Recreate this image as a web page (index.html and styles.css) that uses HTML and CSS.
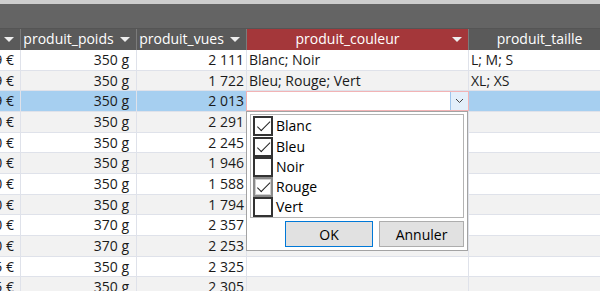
FILE: index.html
```html
<!DOCTYPE html>
<html lang="fr">
<head>
    <meta charset="UTF-8">
    <title>Produits</title>
    <link rel="stylesheet" href="styles.css">
</head>
<body>
<div class="app">
    <div class="topStrip"></div>
    <div class="toolbar"></div>
    <div class="grid">
        <div class="head">
            <div class="hcell"><span class="arrow"></span></div>
            <div class="hcell">produit_poids<span class="arrow"></span></div>
            <div class="hcell">produit_vues<span class="arrow"></span></div>
            <div class="hcell active">produit_couleur<span class="arrow"></span></div>
            <div class="hcell">produit_taille<span class="arrow"></span></div>
        </div>

        <div class="row">
            <div class="cell num">29,99 €</div><div class="cell num">350 g</div><div class="cell num">2 111</div>
            <div class="cell">Blanc; Noir</div><div class="cell">L; M; S</div>
        </div>
        <div class="row alt">
            <div class="cell num">29,99 €</div><div class="cell num">350 g</div><div class="cell num">1 722</div>
            <div class="cell">Bleu; Rouge; Vert</div><div class="cell">XL; XS</div>
        </div>
        <div class="row selected">
            <div class="cell num">29,99 €</div><div class="cell num">350 g</div><div class="cell num">2 013</div>
            <div class="cell comboCell">
                <div class="combo">
                    <span class="comboText"></span>
                    <span class="comboBtn">
                        <svg width="9" height="6" viewBox="0 0 9 6"><polyline points="1,1 4.5,4.5 8,1" fill="none" stroke="#444" stroke-width="1"/></svg>
                    </span>
                </div>
                <div class="popup">
                    <div class="list">
                        <div class="item"><span class="box checked"></span>Blanc</div>
                        <div class="item"><span class="box checked"></span>Bleu</div>
                        <div class="item"><span class="box"></span>Noir</div>
                        <div class="item"><span class="box checked hover"></span>Rouge</div>
                        <div class="item"><span class="box"></span>Vert</div>
                    </div>
                    <div class="buttons">
                        <button type="button" class="btn default">OK</button>
                        <button type="button" class="btn">Annuler</button>
                    </div>
                </div>
            </div>
            <div class="cell"></div>
        </div>
        <div class="row alt">
            <div class="cell num">20,00 €</div><div class="cell num">350 g</div><div class="cell num">2 291</div>
            <div class="cell"></div><div class="cell"></div>
        </div>
        <div class="row">
            <div class="cell num">20,00 €</div><div class="cell num">350 g</div><div class="cell num">2 245</div>
            <div class="cell"></div><div class="cell"></div>
        </div>
        <div class="row alt">
            <div class="cell num">20,00 €</div><div class="cell num">350 g</div><div class="cell num">1 946</div>
            <div class="cell"></div><div class="cell"></div>
        </div>
        <div class="row">
            <div class="cell num">20,00 €</div><div class="cell num">350 g</div><div class="cell num">1 588</div>
            <div class="cell"></div><div class="cell"></div>
        </div>
        <div class="row alt">
            <div class="cell num">20,00 €</div><div class="cell num">350 g</div><div class="cell num">1 794</div>
            <div class="cell"></div><div class="cell"></div>
        </div>
        <div class="row">
            <div class="cell num">30,00 €</div><div class="cell num">370 g</div><div class="cell num">2 357</div>
            <div class="cell"></div><div class="cell"></div>
        </div>
        <div class="row alt">
            <div class="cell num">30,00 €</div><div class="cell num">370 g</div><div class="cell num">2 253</div>
            <div class="cell"></div><div class="cell"></div>
        </div>
        <div class="row">
            <div class="cell num">24,95 €</div><div class="cell num">350 g</div><div class="cell num">2 325</div>
            <div class="cell"></div><div class="cell"></div>
        </div>
        <div class="row alt">
            <div class="cell num">24,95 €</div><div class="cell num">350 g</div><div class="cell num">2 305</div>
            <div class="cell"></div><div class="cell"></div>
        </div>
    </div>
</div>
</body>
</html>
```

FILE: styles.css
```css
body {
    margin: 0;
    overflow: hidden;
    font-family: "Open Sans", "Noto Sans", sans-serif;
    font-size: 14px;
    color: #1a1a1a;
    background: #fff;
}

.app {
    width: 640px;
}

.topStrip {
    height: 4px;
    background-color: #cdcdcd;
}

.toolbar {
    height: 24px;
    background-color: #646464;
}

/* the first column is scrolled almost out of view */
.grid {
    margin-left: -60px;
}

.head,
.row {
    display: grid;
    grid-template-columns: 81px 116px 110px 222px 162px;
}

.head {
    height: 22px;
    background-color: #5a5a5a;
    border-top: 1px solid #555;
    box-sizing: border-box;
}

.hcell {
    position: relative;
    color: #fff;
    text-align: center;
    padding-right: 20px;
    line-height: 20px;
    border-right: 1px solid #7b7b7b;
    white-space: nowrap;
    overflow: hidden;
}

.hcell.active {
    background-color: #a4373a;
}

.arrow {
    position: absolute;
    right: 6px;
    top: 8px;
    width: 0;
    height: 0;
    border-left: 5px solid transparent;
    border-right: 5px solid transparent;
    border-top: 5px solid #eee;
}

.row {
    height: 20.66px;
    box-sizing: border-box;
    border-bottom: 1px solid #dfe2ea;
    background-color: #fff;
}

.row.alt {
    background-color: #f2f2f2;
}

.row.selected {
    background-color: #a6cff0;
}

.cell {
    border-right: 1px solid #dfe2ea;
    padding: 0 2px;
    line-height: 20px;
    white-space: nowrap;
    overflow: hidden;
}

.cell.num {
    text-align: right;
    padding-right: 2px;
}

.row .cell:first-child {
    padding-right: 6px;
}

.row .cell:nth-child(2) {
    padding-right: 7px;
}

.comboCell {
    position: relative;
    overflow: visible;
    padding: 0;
    background-color: #fff;
}

.combo {
    display: flex;
    height: 20px;
    box-sizing: border-box;
    border: 1px solid #f2b3b5;
    margin-left: -1px;
    margin-right: -1px;
    background: #fff;
}

.comboText {
    flex: 1;
}

.comboBtn {
    width: 17px;
    background-color: #e3effa;
    border-left: 1px solid #9ec5ec;
    display: flex;
    align-items: center;
    justify-content: center;
}

.popup {
    position: absolute;
    top: 20px;
    left: -1px;
    width: 222px;
    height: 140px;
    box-sizing: border-box;
    background-color: #fff;
    border: 1px solid #a3a3a3;
    padding: 2px 3px 3px 3px;
    z-index: 2;
}

.list {
    border: 1px solid #b4b4b4;
    height: 104px;
    box-sizing: border-box;
    padding: 1px 2px;
}

.item {
    display: flex;
    align-items: center;
    height: 20.2px;
    color: #000;
    font-size: 14px;
}

.box {
    width: 16px;
    height: 16px;
    border: 2px solid #333;
    margin-right: 3px;
    position: relative;
    background: #fff;
}

.box.hover {
    border: 2px solid #8a8a8a;
    box-shadow: inset 0 0 0 1px #d0d0d0;
}

.box.checked::after {
    content: "";
    position: absolute;
    top: 9px;
    left: 2px;
    width: 12px;
    height: 5px;
    border-left: 1.3px solid #222;
    border-bottom: 1.3px solid #222;
    transform: rotate(-45deg);
    transform-origin: left top;
}

.buttons {
    display: flex;
    justify-content: flex-end;
    gap: 6px;
    padding-top: 3px;
}

.btn {
    font-family: "Open Sans", "Noto Sans", sans-serif;
    font-size: 14px;
    color: #000;
    height: 26px;
    background-color: #e1e1e1;
    border: 1px solid #adadad;
    padding: 0;
}

.btn.default {
    width: 88px;
    border: 1px solid #0078d7;
}

.btn:not(.default) {
    width: 85px;
}
```
